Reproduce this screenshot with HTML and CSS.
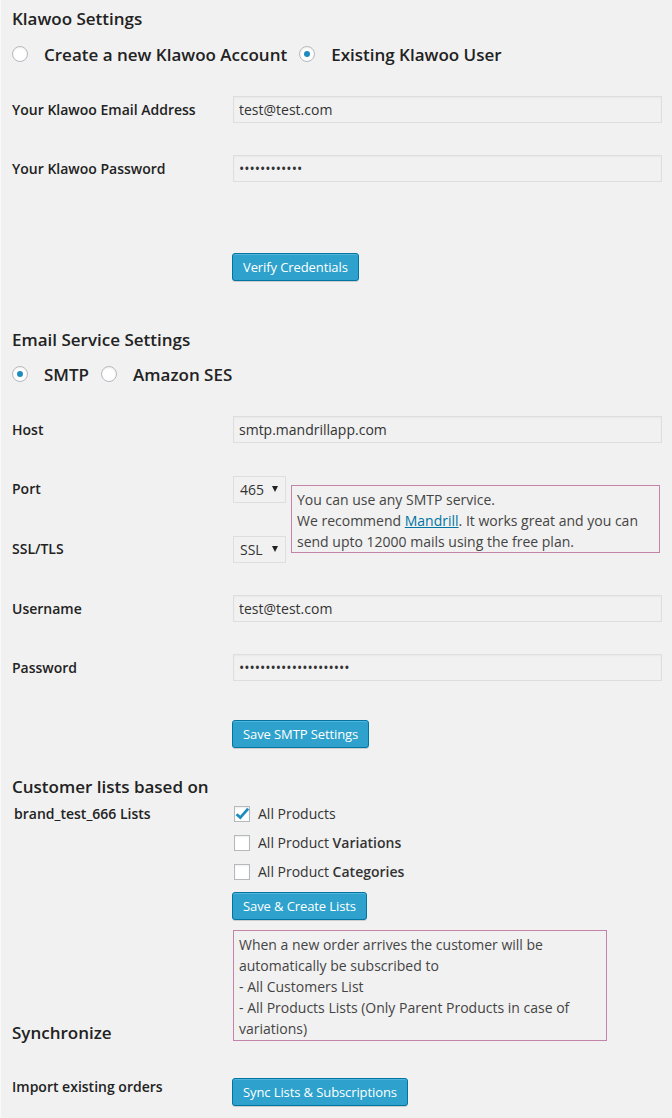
FILE: index.html
```html
<!DOCTYPE html>
<html lang="en">
<head>
<meta charset="utf-8">
<title>Klawoo Settings</title>
<link rel="stylesheet" href="styles.css">
</head>
<body>
<div class="wrap">
  <h3 class="section-title title-first">Klawoo Settings</h3>
  <div class="choice-row">
    <label class="choice"><span class="radio"></span>Create a new Klawoo Account</label>
    <label class="choice"><span class="radio checked"></span>Existing Klawoo User</label>
  </div>
  <div class="form-rows">
    <div class="form-row">
      <span class="field-label">Your Klawoo Email Address</span>
      <input class="text-input" type="text" value="test@test.com">
    </div>
    <div class="form-row">
      <span class="field-label">Your Klawoo Password</span>
      <input class="text-input" type="password" value="xxxxxxxxxxxx">
    </div>
  </div>
  <div class="action action-verify"><button class="btn" type="button">Verify Credentials</button></div>

  <h3 class="section-title title-email">Email Service Settings</h3>
  <div class="choice-row choice-row-email">
    <label class="choice"><span class="radio checked"></span>SMTP</label>
    <label class="choice"><span class="radio"></span>Amazon SES</label>
  </div>
  <div class="form-rows">
    <div class="form-row">
      <span class="field-label">Host</span>
      <input class="text-input" type="text" value="smtp.mandrillapp.com">
    </div>
    <div class="port-group">
      <span class="field-label port-label">Port</span>
      <span class="select-box port-select">465<span class="caret"></span></span>
      <span class="field-label ssl-label">SSL/TLS</span>
      <span class="select-box ssl-select">SSL<span class="caret"></span></span>
      <div class="info-box smtp-note">You can use any SMTP service.<br>We recommend <a class="info-link" href="#">Mandrill</a>. It works great and you can send upto 12000 mails using the free plan.</div>
    </div>
    <div class="form-row">
      <span class="field-label">Username</span>
      <input class="text-input" type="text" value="test@test.com">
    </div>
    <div class="form-row">
      <span class="field-label">Password</span>
      <input class="text-input" type="password" value="xxxxxxxxxxxxxxxxxxxxx">
    </div>
  </div>
  <div class="action action-smtp"><button class="btn" type="button">Save SMTP Settings</button></div>

  <h3 class="section-title title-lists">Customer lists based on</h3>
  <div class="lists">
    <div class="lists-side">
      <span class="lists-label">brand_test_666 Lists</span>
      <h3 class="section-title sync-title">Synchronize</h3>
    </div>
    <div class="lists-main">
      <label class="check-row"><span class="checkbox checked"><svg viewBox="0 0 16 16" width="16" height="16"><path d="M2.6 8.2 L6.3 11.6 L14.2 2.6" fill="none" stroke="#1e8cbe" stroke-width="2.8" stroke-linejoin="miter"/></svg></span>All Products</label>
      <label class="check-row"><span class="checkbox"></span><span>All Product <b>Variations</b></span></label>
      <label class="check-row"><span class="checkbox"></span><span>All Product <b>Categories</b></span></label>
      <button class="btn btn-lists" type="button">Save &amp; Create Lists</button>
      <div class="info-box lists-note">When a new order arrives the customer will be automatically be subscribed to<br>- All Customers List<br>- All Products Lists (Only Parent Products in case of variations)</div>
    </div>
  </div>
  <div class="import-row">
    <span class="field-label import-label">Import existing orders</span>
    <div><button class="btn btn-sync" type="button">Sync Lists &amp; Subscriptions</button></div>
  </div>
</div>
</body>
</html>
```

FILE: styles.css
```css
html {
  background: #f1f1f1;
}

body {
  margin: 0;
  background: #f1f1f1;
  border-left: 1px solid #f9f9f9;
  font-family: "Open Sans", "Liberation Sans", sans-serif;
  font-size: 14px;
  color: #444;
}

.wrap {
  padding: 0 10px 12px 11px;
}

.section-title {
  margin: 0;
  font-size: 17px;
  font-weight: 600;
  line-height: 24px;
  color: #222;
}

.title-first {
  margin-top: 7px;
}

.title-email {
  margin-top: 47px;
}

.title-lists {
  margin-top: 27px;
}

.choice-row {
  display: flex;
  align-items: center;
  gap: 12px;
  height: 24px;
  margin-top: 11px;
  font-size: 17px;
  font-weight: 600;
  color: #222;
}

.choice-row-email {
  margin-top: 10px;
  gap: 12px;
}

.choice {
  display: inline-flex;
  align-items: center;
  gap: 16px;
}

.radio {
  display: inline-flex;
  align-items: center;
  justify-content: center;
  width: 16px;
  height: 16px;
  box-sizing: border-box;
  border: 1px solid #b4b9be;
  border-radius: 50%;
  background: #fff;
  box-shadow: inset 0 1px 2px rgba(0, 0, 0, 0.07);
}

.radio.checked::after {
  content: "";
  width: 6px;
  height: 6px;
  border-radius: 50%;
  background: #1e8cbe;
}

.form-rows {
  margin-top: 14px;
}

.form-row {
  display: grid;
  grid-template-columns: 221px 1fr;
  align-items: center;
  padding: 16px 0;
}

.field-label {
  font-size: 14px;
  font-weight: 600;
  line-height: 20px;
  color: #222;
}

.text-input {
  width: 100%;
  height: 27px;
  box-sizing: border-box;
  margin: 0;
  padding: 0 5px;
  border: 1px solid #dedede;
  background: transparent;
  box-shadow: inset 0 1px 2px rgba(0, 0, 0, 0.04);
  font-family: "Open Sans", "Liberation Sans", sans-serif;
  font-size: 14px;
  color: #333;
  outline: none;
}

.port-group {
  display: grid;
  grid-template-columns: 221px 53px 1fr;
  grid-template-rows: 60px 60px;
  align-items: center;
}

.port-label {
  grid-column: 1;
  grid-row: 1;
}

.port-select {
  grid-column: 2;
  grid-row: 1;
}

.ssl-label {
  grid-column: 1;
  grid-row: 2;
}

.ssl-select {
  grid-column: 2;
  grid-row: 2;
  width: 52px;
}

.select-box {
  display: flex;
  align-items: center;
  justify-content: space-between;
  width: 53px;
  height: 27px;
  box-sizing: border-box;
  padding: 0 7px 0 6px;
  border: 1px solid #dedede;
  font-size: 14px;
  color: #333;
}

.caret {
  width: 0;
  height: 0;
  border-left: 3px solid transparent;
  border-right: 3px solid transparent;
  border-top: 6px solid #222;
}

.info-box {
  border: 1px solid #c484a8;
  padding: 3px 5px 0;
  font-size: 14px;
  line-height: 21px;
  color: #444;
}

.smtp-note {
  grid-column: 3;
  grid-row: 1 / 3;
  align-self: center;
  margin: 0 2px 0 5px;
}

.info-link {
  color: #0074a2;
  text-decoration: underline;
}

.action {
  padding-left: 220px;
}

.action-verify {
  margin-top: 55px;
}

.action-smtp {
  margin-top: 23px;
}

.btn {
  height: 28px;
  box-sizing: border-box;
  margin: 0;
  padding: 0 10px 1px;
  border: 1px solid #0074a2;
  border-radius: 3px;
  background: #2ea2cc;
  box-shadow: inset 0 1px 0 rgba(120, 200, 230, 0.5), 0 1px 0 rgba(0, 0, 0, 0.15);
  font-family: "Open Sans", "Liberation Sans", sans-serif;
  font-size: 13px;
  line-height: 26px;
  letter-spacing: -0.1px;
  color: #fff;
  cursor: pointer;
}

.lists {
  display: grid;
  grid-template-columns: 221px 1fr;
}

.lists-side {
  display: flex;
  flex-direction: column;
  justify-content: space-between;
}

.lists-label {
  padding-left: 2px;
  font-size: 14px;
  font-weight: 600;
  line-height: 29px;
  color: #222;
}

.sync-title {
  margin-bottom: -4px;
}

.lists-main {
  display: flex;
  flex-direction: column;
  align-items: flex-start;
}

.check-row {
  display: flex;
  align-items: center;
  gap: 8px;
  height: 29px;
  margin-left: 1px;
  font-size: 14px;
  color: #333;
}

.check-row b {
  font-weight: 600;
}

.checkbox {
  display: inline-flex;
  align-items: center;
  justify-content: center;
  width: 16px;
  height: 16px;
  box-sizing: border-box;
  border: 1px solid #b4b9be;
  background: #fff;
  box-shadow: inset 0 1px 2px rgba(0, 0, 0, 0.07);
  overflow: visible;
}

.checkbox svg {
  display: block;
  flex: none;
  overflow: visible;
}

.btn-lists {
  margin-top: 6px;
  margin-left: -1px;
}

.lists-note {
  width: 374px;
  box-sizing: border-box;
  margin-top: 10px;
  padding: 3px 5px 1px;
}

.import-row {
  display: grid;
  grid-template-columns: 220px 1fr;
  align-items: start;
  padding-top: 34px;
}

.import-label {
  line-height: 24px;
}

.btn-sync {
  margin-top: 3px;
}
```
